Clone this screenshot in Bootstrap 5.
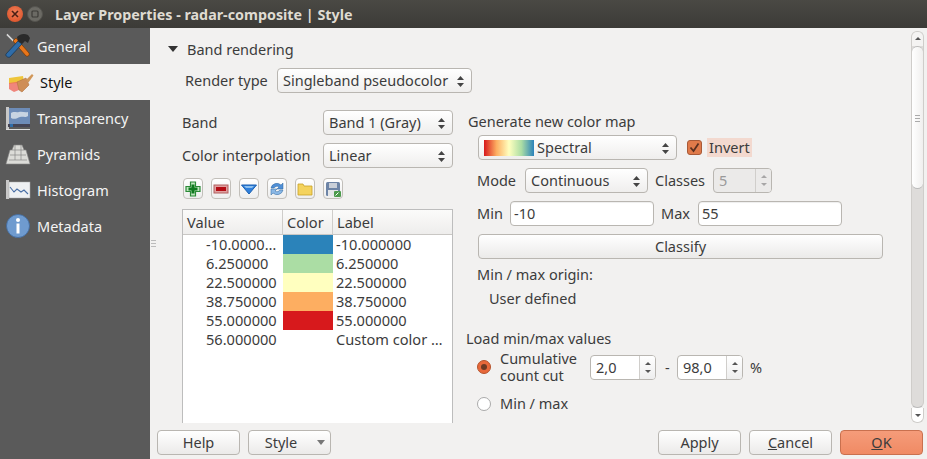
<!DOCTYPE html>
<html lang="en">
<head>
    <meta charset="UTF-8">
    <title>Layer Properties - radar-composite | Style</title>
    <link href="https://cdn.jsdelivr.net/npm/bootstrap@5.3.0/dist/css/bootstrap.min.css" rel="stylesheet">
    <style>
        html, body { height: 459px; overflow: hidden; background: #f2f1f0; }
        body { font-family: "Noto Sans", sans-serif; font-size: 14.5px; color: #3c3c3c; line-height: 19px; }
        .titlebar { height: 28px; background: linear-gradient(#4a4944, #3c3b37); color: #dfdbd2; font-weight: 700; font-size: 14.3px; padding-left: 7px; }
        .wbtn { width: 16px; height: 16px; border-radius: 50%; }
        .wbtn-close { background: radial-gradient(circle at 50% 40%, #f0805a, #d84a20); margin-right: 4px; }
        .wbtn-min { background: #6b6a64; border: 1px solid #55544f; margin-right: 12px; }
        .dialog-body { height: 431px; }
        .side { width: 150px; background: #5a5a5a; flex: none; }
        .side-item { height: 36px; color: #f4f4f4; font-size: 14.5px; }
        .side-item svg { width: 26px; height: 26px; margin: 0 6px 0 5px; flex: none; }
        .side-item.active { background: #f2f1f0; color: #111; }
        .side-item.active svg { margin: 0 6px 0 8px; }
        .pane { width: 777px; }
        .scroll-wrap { height: 395px; }
        .form-area { width: 756px; overflow: hidden; position: relative; }
        .splitter { position: absolute; left: 1px; top: 212px; width: 5px; height: 7px; border-top: 1px solid #bbb; border-bottom: 1px solid #bbb; background: linear-gradient(#bbb, #bbb) center / 100% 1px no-repeat; }
        .band-head { height: 24px; margin: 9px 0 0 18px; }
        .tri { width: 0; height: 0; border-left: 5px solid transparent; border-right: 5px solid transparent; border-top: 6px solid #333; margin-right: 9px; }
        .render-row { margin: 7px 0 0 35px; height: 24px; }
        .render-row label { width: 92px; }
        .qbox { border: 1px solid #b9b6b1; border-radius: 4px; background: linear-gradient(#fff, #efeeed); height: 25px; padding: 0 5px; color: #3c3c3c; position: relative; display: flex; align-items: center; white-space: nowrap; }
        .updown { position: absolute; right: 7px; top: 7px; width: 7px; height: 11px; }
        .col-left { width: 271px; margin-left: 32px; flex: none; }
        .col-right { margin-left: 15px; flex: none; width: 438px; }
        .two-cols { margin-top: 14px; }
        .lrow { height: 33px; }
        .lrow label { width: 141px; white-space: nowrap; }
        .tool-row { gap: 8px; margin: 6px 0 9px 1px; height: 22px; }
        .tbtn { width: 20px; height: 21px; border: 1px solid #c2bfba; border-radius: 4px; background: linear-gradient(#fff, #eee); padding: 1px; display: flex; align-items: center; justify-content: center; }
        .tbtn svg { width: 16px; height: 16px; }
        .colormap { border: 1px solid #bdbdbd; border-bottom: 0; background: #fff; height: 214px; font-size: 14.6px; }
        .map-head { height: 25px; background: linear-gradient(#fbfbfa, #eeedec); border-bottom: 1px solid #c9c7c4; }
        .map-head > div { padding-left: 4px; border-right: 1px solid #cfcdca; line-height: 24px; }
        .cv { width: 100px; flex: none; }
        .cc { width: 50px; flex: none; }
        .cl { flex: 1; padding-left: 3px; white-space: nowrap; overflow: hidden; }
        .map-row { height: 19px; }
        .map-row .cv { padding-left: 23px; white-space: nowrap; }
        .sw-1 { background: #2b83ba; } .sw-2 { background: #abdda4; } .sw-3 { background: #ffffbf; } .sw-4 { background: #fdae61; } .sw-5 { background: #d7191c; }
        .gen-title { margin-top: 6px; height: 19px; }
        .r-row { height: 25px; margin-top: 8px; margin-left: 9px; }
        .r-row.first { margin-top: 4px; margin-left: 10px; }
        .gradient-sw { width: 50px; height: 16px; background: linear-gradient(90deg, #d7191c, #fdae61 25%, #ffffbf 50%, #abdda4 75%, #2b83ba); margin-right: 3px; }
        .cbx { width: 15px; height: 15px; border-radius: 3px; background: #e07a4a; border: 1px solid #a85a38; margin: 0 5px 0 10px; display: flex; }
        .invert-lbl { background: #f3d9cf; height: 19px; padding: 0 2px; }
        .qinput { border: 1px solid #b9b6b1; border-radius: 4px; background: #fff; height: 25px; padding: 0 3px; display: flex; align-items: center; box-shadow: inset 0 1px 1px #eee; }
        .spin { border: 1px solid #b9b6b1; border-radius: 4px; height: 25px; display: flex; background: #fff; overflow: hidden; }
        .spin-val { flex: 1; padding-left: 5px; line-height: 23px; }
        .spin-arrows { width: 16px; border-left: 1px solid #d0cecb; background: linear-gradient(#fff, #eee); display: flex; flex-direction: column; align-items: center; justify-content: center; gap: 5px; }
        .au { width: 0; height: 0; border-left: 3px solid transparent; border-right: 3px solid transparent; border-bottom: 3px solid #555; }
        .ad { width: 0; height: 0; border-left: 3px solid transparent; border-right: 3px solid transparent; border-top: 3px solid #555; }
        .spin.off { background: #ebeae9; color: #999; }
        .spin.off .spin-arrows { background: #ebeae9; }
        .spin.off .au, .spin.off .ad { opacity: .45; }
        .qbtn { border: 1px solid #b9b6b1; border-radius: 4px; background: linear-gradient(#fff, #ebeae9); height: 25px; width: 83px; color: #3c3c3c; display: flex; align-items: center; justify-content: center; padding: 0; }
        .classify { width: 405px; margin: 8px 0 0 10px; }
        .radio-on { width: 14px; height: 14px; border-radius: 50%; border: 1px solid #b5532c; background: #e8683a; display: flex; align-items: center; justify-content: center; flex: none; }
        .radio-on i { width: 6px; height: 6px; border-radius: 50%; background: #6d3a24; display: block; }
        .radio-off { width: 14px; height: 14px; border-radius: 50%; border: 1px solid #aaa; background: #fff; flex: none; }
        .vbar { width: 13px; margin: 3px 0 0 5px; height: 392px; position: relative; flex: none; }
        .vtrack { height: 377px; background: #dedcda; border: 1px solid #cfcdca; border-bottom-color: #bbb; border-radius: 6px; overflow: hidden; position: relative; }
        .vup { height: 14px; background: #f4f3f2; display: flex; justify-content: center; padding-top: 5px; }
        .vthumb { height: 143px; background: linear-gradient(90deg, #fff, #f0efee); border: 1px solid #bbb; border-width: 1px 0; border-radius: 6px; }
        .vgrip { position: absolute; top: 83px; left: 3px; width: 5px; height: 7px; border-top: 1px solid #aaa; border-bottom: 1px solid #aaa; background: linear-gradient(#aaa, #aaa) center / 100% 1px no-repeat; }
        .vend { height: 15px; background: #fff; border: 1px solid #cfcdca; border-top: 0; border-radius: 0 0 6px 6px; display: flex; align-items: center; justify-content: center; }
        .foot { height: 36px; padding: 7px 4px 0 7px; }
        .dd-arrow { width: 0; height: 0; border-left: 4px solid transparent; border-right: 4px solid transparent; border-top: 5px solid #777; margin-left: 20px; margin-right: -11px; }
        .ok-btn { background: linear-gradient(#f59c7a, #f08a64); border-color: #c9704e; }
    </style>
</head>
<body>
    <div class="titlebar d-flex align-items-center">
        <div class="wbtn wbtn-close d-flex align-items-center justify-content-center">
            <svg width="8" height="8" viewBox="0 0 8 8"><path d="M1 1l6 6M7 1l-6 6" stroke="#4a2015" stroke-width="1.6"/></svg>
        </div>
        <div class="wbtn wbtn-min d-flex align-items-center justify-content-center">
            <svg width="8" height="8" viewBox="0 0 8 8"><rect x="1" y="1" width="6" height="6" rx="1" fill="none" stroke="#3c3b37" stroke-width="1.2"/></svg>
        </div>
        <span>Layer Properties - radar-composite | Style</span>
    </div>
    <div class="dialog-body d-flex">
        <div class="side">
            <div class="side-item d-flex align-items-center">
                <svg viewBox="0 0 26 26"><path d="M1 2l1.500-1.500 7 7-1.500 1.500z" fill="#d0d0d0" stroke="#444" stroke-width=".4"/><path d="M8 8l3-3 13 15c1 2-1 4-3 3z" fill="#e8751a" stroke="#6e3606" stroke-width=".7"/><path d="M1 21l12-13 4 3-12 13c-2 1-5-1-4-3z" fill="#2f6ca8" stroke="#14324f" stroke-width=".7"/><path d="M12 4c3-3 7-4 11-2l2 3-2 5-3-2-3 3-4-3z" fill="#2a2a2a"/></svg>
                General
            </div>
            <div class="side-item active d-flex align-items-center">
                <svg viewBox="0 0 26 26"><path d="M1 9l14-2 1 6-15 2z" fill="#eec53a"/><path d="M1 14l13-2 2 7-10 4-5-3z" fill="#ef6a5f" opacity=".8"/><path d="M9 13l9-4 3 7-7 7-3-2z" fill="#cf8e56" stroke="#b07440" stroke-width=".6"/><path d="M18 11l6-6 1.500 1.500-5 7z" fill="#d19758"/></svg>
                Style
            </div>
            <div class="side-item d-flex align-items-center">
                <svg viewBox="0 0 26 26"><rect x="1" y="2" width="3" height="22" fill="#c8c8c8"/><rect x="4" y="3" width="21" height="16" fill="#6d8cb8"/><path d="M6 8c3-2 5 0 8-1s6 1 9 0v4c-3 2-5 0-8 1s-5 3-9 1z" fill="#c8d4e2"/><rect x="3" y="19" width="22" height="3" fill="#445"/><rect x="5" y="19" width="3" height="3" fill="#2f6ca8"/><rect x="1" y="24" width="24" height="1" fill="#ddd"/></svg>
                Transparency
            </div>
            <div class="side-item d-flex align-items-center">
                <svg viewBox="0 0 26 26"><path d="M9 4h8l2 5h2l4 14H1L5 9h2z" fill="#dcdcd8" stroke="#888" stroke-width=".6"/><path d="M5 14h16M7 9h12M4 19h18M10 4v15M16 4v15" stroke="#888" stroke-width=".7" fill="none"/></svg>
                Pyramids
            </div>
            <div class="side-item d-flex align-items-center">
                <svg viewBox="0 0 26 26"><rect x="1" y="3" width="3" height="19" fill="#c8c8c8"/><rect x="4" y="5" width="21" height="16" fill="#eef0f2" stroke="#aaa" stroke-width=".5"/><path d="M5 10l4 5 3-3 4 3 3-2 4 4" fill="none" stroke="#4a6fa5" stroke-width="1.100"/></svg>
                Histogram
            </div>
            <div class="side-item d-flex align-items-center">
                <svg viewBox="0 0 26 26"><circle cx="13" cy="13" r="11.500" fill="#6f9bcf" stroke="#3f6aa0" stroke-width=".8"/><circle cx="13" cy="7" r="2" fill="#fff"/><rect x="11.500" y="10.500" width="3" height="10" fill="#fff"/></svg>
                Metadata
            </div>
        </div>
        <div class="pane">
            <div class="scroll-wrap d-flex">
                <div class="form-area">
                    <div class="splitter"></div>
                    <div class="band-head d-flex align-items-center"><div class="tri"></div>Band rendering</div>
                    <div class="render-row d-flex align-items-center">
                        <label>Render type</label>
                        <div class="qbox" style="width:195px">Singleband pseudocolor<svg class="updown" viewBox="0 0 7 11"><path d="M3.500 0L7 4H0zM3.500 11L0 7h7z" fill="#444"/></svg></div>
                    </div>
                    <div class="two-cols d-flex">
                        <div class="col-left">
                            <div class="lrow d-flex align-items-center">
                                <label>Band</label>
                                <div class="qbox" style="width:130px">Band 1 (Gray)<svg class="updown" viewBox="0 0 7 11"><path d="M3.500 0L7 4H0zM3.500 11L0 7h7z" fill="#444"/></svg></div>
                            </div>
                            <div class="lrow d-flex align-items-center">
                                <label>Color interpolation</label>
                                <div class="qbox" style="width:130px">Linear<svg class="updown" viewBox="0 0 7 11"><path d="M3.500 0L7 4H0zM3.500 11L0 7h7z" fill="#444"/></svg></div>
                            </div>
                            <div class="tool-row d-flex">
                                <div class="tbtn"><svg viewBox="0 0 16 16"><path d="M5.500 1h5v4.500H15v5h-4.500V15h-5v-4.500H1v-5h4.500z" fill="#bfe5bf" stroke="#2a8a36" stroke-width="1.200"/><path d="M6.500 3.500h3v3h3v3h-3v3h-3v-3h-3v-3h3z" fill="#0f7a1f"/></svg></div>
                                <div class="tbtn"><svg viewBox="0 0 16 16"><rect x="1" y="4" width="14" height="8" fill="#e0a0a0" stroke="#b06060"/><rect x="3" y="6" width="10" height="4" fill="#b40c14"/></svg></div>
                                <div class="tbtn"><svg viewBox="0 0 16 16"><path d="M0.500 4h15L8 13z" fill="#2f80dc" stroke="#1a5fb0"/><path d="M3 5h10L11 7H5z" fill="#8cc0f0"/></svg></div>
                                <div class="tbtn"><svg viewBox="0 0 16 16"><path d="M2 7a6 6 0 0 1 10-3l2-2v6H8l2-2a3.500 3.500 0 0 0-5 1z" fill="#4f8fd6" stroke="#2c659f" stroke-width=".5"/><path d="M14 9a6 6 0 0 1-10 3l-2 2V8h6l-2 2a3.500 3.500 0 0 0 5-1z" fill="#8ab8e6" stroke="#2c659f" stroke-width=".5"/></svg></div>
                                <div class="tbtn"><svg viewBox="0 0 16 16"><path d="M1 3h5l1 2h8v9H1z" fill="#f4d35e" stroke="#c9a227" stroke-width=".8"/></svg></div>
                                <div class="tbtn"><svg viewBox="0 0 16 16"><rect x="1" y="1" width="14" height="14" rx="1.500" fill="#6d84a6"/><rect x="4" y="2" width="8" height="5" fill="#c9cfd8"/><rect x="3" y="9" width="10" height="6" fill="#e4e6e9"/><rect x="9" y="10" width="7" height="6" rx="1" fill="#4c9a4c"/><path d="M10.500 14.500l3-3" stroke="#fff"/></svg></div>
                            </div>
                            <div class="colormap">
                                <div class="map-head d-flex">
                                    <div class="cv">Value</div><div class="cc">Color</div><div class="cl" style="border-right:0">Label</div>
                                </div>
                                <div class="map-row d-flex"><div class="cv">-10.0000…</div><div class="cc sw-1"></div><div class="cl">-10.000000</div></div>
                                <div class="map-row d-flex"><div class="cv">6.250000</div><div class="cc sw-2"></div><div class="cl">6.250000</div></div>
                                <div class="map-row d-flex"><div class="cv">22.500000</div><div class="cc sw-3"></div><div class="cl">22.500000</div></div>
                                <div class="map-row d-flex"><div class="cv">38.750000</div><div class="cc sw-4"></div><div class="cl">38.750000</div></div>
                                <div class="map-row d-flex"><div class="cv">55.000000</div><div class="cc sw-5"></div><div class="cl">55.000000</div></div>
                                <div class="map-row d-flex"><div class="cv">56.000000</div><div class="cc"></div><div class="cl">Custom color …</div></div>
                            </div>
                        </div>
                        <div class="col-right">
                            <div class="gen-title ms-0">Generate new color map</div>
                            <div class="r-row first d-flex align-items-center">
                                <div class="qbox" style="width:199px"><div class="gradient-sw"></div>Spectral<svg class="updown" viewBox="0 0 7 11"><path d="M3.500 0L7 4H0zM3.500 11L0 7h7z" fill="#444"/></svg></div>
                                <div class="cbx"><svg width="13" height="13" viewBox="0 0 13 13"><path d="M2.500 6.500l3 3.500 5-7.500" fill="none" stroke="#5a3020" stroke-width="1.800"/></svg></div>
                                <div class="invert-lbl">Invert</div>
                            </div>
                            <div class="r-row d-flex align-items-center">
                                <span style="width:48px">Mode</span>
                                <div class="qbox" style="width:123px">Continuous<svg class="updown" viewBox="0 0 7 11"><path d="M3.500 0L7 4H0zM3.500 11L0 7h7z" fill="#444"/></svg></div>
                                <span style="margin-left:7px;width:58px">Classes</span>
                                <div class="spin off" style="width:59px"><div class="spin-val">5</div><div class="spin-arrows"><i class="au"></i><i class="ad"></i></div></div>
                            </div>
                            <div class="r-row d-flex align-items-center">
                                <span style="width:33px">Min</span>
                                <div class="qinput" style="width:144px">-10</div>
                                <span style="margin-left:7px;width:37px">Max</span>
                                <div class="qinput" style="width:144px">55</div>
                            </div>
                            <button class="qbtn classify" type="button">Classify</button>
                            <div style="margin:6px 0 0 9px">Min / max origin:</div>
                            <div style="margin:5px 0 0 21px">User defined</div>
                            <div style="margin:21px 0 0 -2px">Load min/max values</div>
                            <div class="d-flex align-items-center" style="margin:0 0 0 9px;height:38px;">
                                <div class="radio-on"><i></i></div>
                                <div style="width:90px;margin-left:9px;line-height:17px">Cumulative count cut</div>
                                <div class="spin" style="width:66px"><div class="spin-val">2,0</div><div class="spin-arrows"><i class="au"></i><i class="ad"></i></div></div>
                                <span style="margin-left:9px;width:12px">-</span>
                                <div class="spin" style="width:66px"><div class="spin-val">98,0</div><div class="spin-arrows"><i class="au"></i><i class="ad"></i></div></div>
                                <span style="margin-left:7px">%</span>
                            </div>
                            <div class="d-flex align-items-center" style="margin:8px 0 0 9px">
                                <div class="radio-off"></div>
                                <div style="margin-left:9px">Min / max</div>
                            </div>
                        </div>
                    </div>
                </div>
                <div class="vbar">
                    <div class="vtrack">
                        <div class="vup"><i class="au"></i></div>
                        <div class="vthumb"></div>
                        <div class="vgrip"></div>
                    </div>
                    <div class="vend"><i class="ad"></i></div>
                </div>
            </div>
            <div class="foot d-flex">
                <button class="qbtn" type="button">Help</button>
                <button class="qbtn ms-2" type="button">Style<i class="dd-arrow"></i></button>
                <div class="ms-auto d-flex gap-2">
                    <button class="qbtn" type="button">Apply</button>
                    <button class="qbtn" type="button"><span><u>C</u>ancel</span></button>
                    <button class="qbtn ok-btn" type="button"><span><u>O</u>K</span></button>
                </div>
            </div>
        </div>
    </div>
</body>
</html>
